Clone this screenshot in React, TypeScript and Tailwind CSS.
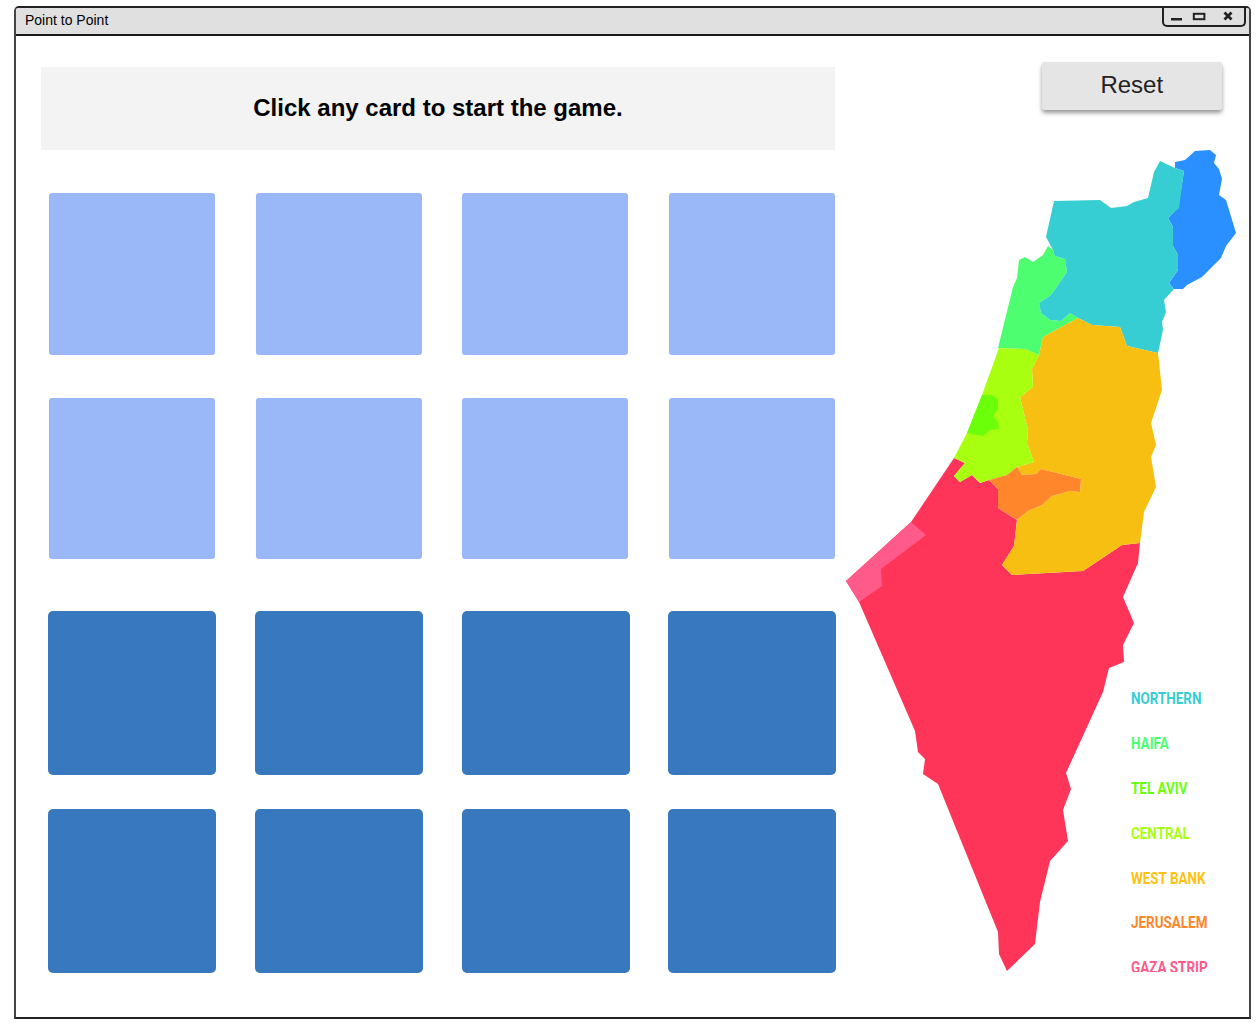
const sans = { fontFamily: '"Liberation Sans", Arial, sans-serif' };

const regions = [
  { color: '#ff3459', points: '954,458 965,463 954,476 960,482 972,475 980,483 989,480 998,489 998,508 1017,520 1014,546 1002,565 1012,575 1083,571 1122,545 1140,543 1138,563 1123,597 1134,623 1123,645 1124,662 1109,668 1103,692 1066,773 1071,789 1063,810 1068,841 1050,861 1040,902 1035,944 1007,971 999,954 998,932 938,784 923,774 925,759 918,752 915,731 859,602 846,581 911,522' },
  { color: '#ff5a8a', points: '911,522 926,535 881,569 882,586 859,602 846,581' },
  { color: '#4dff70', points: '1048,246 1053,250 1055,256 1065,259 1067,272 1051,295 1039,303 1041,313 1050,320 1061,321 1070,313 1078,318 1043,337 1039,355 1025,349 998,348 1013,287 1017,278 1019,260 1025,257 1033,262 1043,255' },
  { color: '#2a90ff', points: '1175,162 1185,160 1195,151 1210,150 1216,155 1214,163 1219,169 1222,179 1219,195 1226,200 1236,233 1226,246 1221,258 1202,277 1187,285 1183,289 1174,289 1169,283 1178,270 1178,255 1173,246 1173,227 1168,218 1178,208 1184,171 1175,168' },
  { color: '#37ced3', points: '1160,161 1175,168 1184,171 1179,208 1168,218 1173,227 1173,246 1178,255 1178,270 1169,283 1174,289 1164,300 1166,312 1162,322 1163,330 1158,353 1127,346 1120,327 1092,325 1078,318 1070,313 1061,321 1050,320 1041,313 1039,303 1051,295 1067,272 1065,259 1055,256 1053,250 1046,237 1054,201 1100,200 1111,208 1127,206 1134,202 1148,198 1154,172' },
  { color: '#f7bf12', points: '1078,318 1092,325 1120,327 1127,346 1158,353 1162,390 1151,423 1156,445 1151,457 1156,487 1144,512 1140,543 1122,545 1083,571 1012,575 1002,565 1014,546 1017,520 1028,511 1042,505 1052,496 1070,491 1080,492 1081,479 1041,469 1036,474 1022,475 1017,467 1034,462 1027,443 1028,430 1020,397 1033,387 1032,369 1039,355 1043,337' },
  { color: '#a8ff0f', points: '999,348 1025,349 1039,355 1032,369 1033,387 1020,397 1028,430 1027,443 1034,462 1017,467 1007,475 989,480 980,483 972,475 960,482 954,476 965,463 954,458 967,433 982,395' },
  { color: '#6bff0a', points: '982,395 992,395 998,399 998,409 993,416 998,422 999,429 990,430 983,436 967,433' },
  { color: '#ff862a', points: '989,480 1007,475 1017,467 1022,475 1036,474 1041,469 1081,479 1080,492 1070,491 1052,496 1042,505 1028,511 1017,520 998,508 998,489' },
];

const legend = [
  { label: 'NORTHERN', className: 'text-[#37ced3]' },
  { label: 'HAIFA', className: 'text-[#4dff70]' },
  { label: 'TEL AVIV', className: 'text-[#6bff0a]' },
  { label: 'CENTRAL', className: 'text-[#a8ff0f]' },
  { label: 'WEST BANK', className: 'text-[#ffc20f]' },
  { label: 'JERUSALEM', className: 'text-[#ff862a]' },
  { label: 'GAZA STRIP', className: 'text-[#ff5a8a]' },
];

function WindowControls() {
  return (
    <div className="absolute right-[3px] top-0 w-[84px] h-[19px] border-2 border-t-0 border-[#222222] rounded-b-[5px]">
      <svg width="80" height="17" viewBox="0 0 80 17" className="block">
        <rect x="7" y="10" width="11" height="2.5" fill="#222222" />
        <rect x="29.8" y="5.8" width="10.6" height="5.4" fill="none" stroke="#222222" strokeWidth="2" />
        <path d="M60.5 4.5 L67.5 11.5 M67.5 4.5 L60.5 11.5" stroke="#222222" strokeWidth="2.8" />
      </svg>
    </div>
  );
}

function CardRow({ dark }: { dark?: boolean }) {
  const size = dark ? 'w-[168px] h-[164px] rounded-[5px] bg-[#3778be]' : 'w-[166px] h-[161.6px] rounded-[3px] bg-[#9ab8f8]';
  return (
    <div className="flex justify-between">
      <div className={size} />
      <div className={size} />
      <div className={size} />
      <div className={size} />
    </div>
  );
}

export default function App() {
  return (
    <div className="pt-[6px] pl-[14px] bg-white h-[1024px] overflow-hidden" style={sans}>
      <div className="w-[1237px] h-[1013px] border-2 border-[#222222] border-x-[#444444] rounded-t-[5px] bg-white">
        <div className="relative h-[28px] bg-[#e0e0e0] border-b-2 border-[#1a1a1a] rounded-t-[3px] pl-[9px] text-[14px] leading-[25px] text-black">
          Point to Point
          <WindowControls />
        </div>

        <div className="flex">
          <div className="w-[830px] pl-[25px] pt-[31px] shrink-0">
            <div className="w-[794px] h-[83px] pb-[2px] bg-[#f3f3f3] flex items-center justify-center text-2xl font-bold text-black">
              Click any card to start the game.
            </div>
            <div className="mt-[43px] ml-[7.8px] w-[786.2px] flex flex-col gap-[43px]">
              <CardRow />
              <CardRow />
            </div>
            <div className="mt-[51.8px] ml-[7.2px] w-[788px] flex flex-col gap-[34px]">
              <CardRow dark />
              <CardRow dark />
            </div>
          </div>

          <div className="w-[390px] pt-[26px]">
            <button className="block ml-[195.5px] w-[180.5px] h-[47.5px] pb-[2px] bg-[#e5e5e5] rounded-[3px] text-2xl text-[#222222] shadow-[0_3px_4px_rgba(0,0,0,0.4)]">
              Reset
            </button>
            <div className="relative mt-[40.5px] w-[390px] h-[822px]">
              <svg width="390" height="822" viewBox="846 150 390 822" className="block">
                {regions.map((region) => (
                  <polygon key={region.color} points={region.points} fill={region.color} />
                ))}
              </svg>
              <div
                className="absolute left-[285px] top-[527px] h-[295px] overflow-hidden text-[16px] font-bold origin-left scale-x-[0.84]"
                style={{ fontFamily: 'Roboto, sans-serif' }}
              >
                {legend.map((item) => (
                  <div key={item.label} className={`h-[44.8px] flex items-center ${item.className}`}>
                    {item.label}
                  </div>
                ))}
              </div>
            </div>
          </div>
        </div>
      </div>
    </div>
  );
}
